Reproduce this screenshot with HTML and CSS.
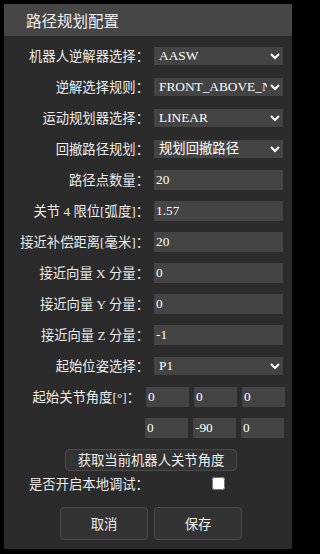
FILE: index.html
```html
<!DOCTYPE html>
<html lang="zh-CN">
<head>
<meta charset="utf-8">
<title>路径规划配置</title>
<link rel="stylesheet" href="styles.css">
</head>
<body>
<div class="panel">
  <div class="header">路径规划配置</div>
  <div class="form">
    <div class="row">
      <label class="label">机器人逆解器选择：</label>
      <select class="ctl sel"><option>AASW</option></select>
    </div>
    <div class="row">
      <label class="label">逆解选择规则：</label>
      <select class="ctl sel"><option>FRONT_ABOVE_NOFLIP</option></select>
    </div>
    <div class="row">
      <label class="label">运动规划器选择：</label>
      <select class="ctl sel"><option>LINEAR</option></select>
    </div>
    <div class="row">
      <label class="label">回撤路径规划：</label>
      <select class="ctl sel"><option>规划回撤路径</option></select>
    </div>
    <div class="row">
      <label class="label">路径点数量：</label>
      <input class="ctl inp" type="text" value="20">
    </div>
    <div class="row">
      <label class="label">关节 4 限位[弧度]：</label>
      <input class="ctl inp" type="text" value="1.57">
    </div>
    <div class="row">
      <label class="label">接近补偿距离[毫米]：</label>
      <input class="ctl inp" type="text" value="20">
    </div>
    <div class="row">
      <label class="label">接近向量 X 分量：</label>
      <input class="ctl inp" type="text" value="0">
    </div>
    <div class="row">
      <label class="label">接近向量 Y 分量：</label>
      <input class="ctl inp" type="text" value="0">
    </div>
    <div class="row">
      <label class="label">接近向量 Z 分量：</label>
      <input class="ctl inp" type="text" value="-1">
    </div>
    <div class="row">
      <label class="label">起始位姿选择：</label>
      <select class="ctl sel"><option>P1</option></select>
    </div>
    <div class="row">
      <label class="label short">起始关节角度[°]：</label>
      <div class="triple">
        <input class="inp small" type="text" value="0">
        <input class="inp small" type="text" value="0">
        <input class="inp small" type="text" value="0">
      </div>
    </div>
    <div class="row">
      <span class="label short"></span>
      <div class="triple second">
        <input class="inp small" type="text" value="0">
        <input class="inp small" type="text" value="-90">
        <input class="inp small" type="text" value="0">
      </div>
    </div>
    <div class="getrow">
      <button class="btn getbtn" type="button">获取当前机器人关节角度</button>
    </div>
    <div class="checkrow">
      <label class="checklabel">是否开启本地调试：</label>
      <span class="checkcell"><input class="chk" type="checkbox"></span>
    </div>
    <div class="actions">
      <button class="btn act" type="button">取消</button>
      <button class="btn act" type="button">保存</button>
    </div>
  </div>
</div>
</body>
</html>
```

FILE: styles.css
```css
html, body {
  margin: 0;
  padding: 0;
  background: #000;
}

body {
  width: 296px;
  height: 554px;
  overflow: hidden;
}

.panel {
  margin: 4px;
  width: 288px;
  height: 545px;
  background: #2b2b2b;
  font-family: "Liberation Serif", "Noto Sans CJK SC", serif;
  color: #ececec;
}

.header {
  height: 32px;
  line-height: 32px;
  padding-left: 22px;
  background: #464646;
  font-family: "Noto Sans CJK SC", sans-serif;
  font-size: 15.5px;
  color: #eeeeee;
}

.form {
  padding-top: 4px;
}

.row {
  display: flex;
  align-items: center;
  height: 31px;
}

.label {
  width: 145px;
  margin-right: 5px;
  text-align: right;
  font-size: 13.33px;
  white-space: nowrap;
}

.label.short {
  width: 136px;
  margin-right: 6px;
}

.ctl {
  width: 129px;
  box-sizing: border-box;
  border: none;
  border-radius: 0;
  background: #444444;
  color: #ffffff;
  font-family: "Liberation Serif", "Noto Sans CJK SC", serif;
  font-size: 13.33px;
  margin: 0;
  outline: none;
}

.sel {
  height: 18px;
  padding: 0 0 0 1px;
  color-scheme: dark;
}

.inp {
  height: 20px;
  padding: 0 2px;
  box-sizing: border-box;
  border: none;
  background: #444444;
  color: #ffffff;
  font-family: "Liberation Serif", "Noto Sans CJK SC", serif;
  font-size: 13.33px;
  margin: 0;
  outline: none;
}

.triple {
  display: flex;
  gap: 5px;
}

.triple.second {
  margin-left: -1px;
}

.inp.small {
  width: 43px;
}

.btn {
  box-sizing: border-box;
  background: #333333;
  border: 1px solid #4a4a4a;
  border-radius: 4px;
  color: #eeeeee;
  font-family: "Noto Sans CJK SC", sans-serif;
  padding: 0;
  margin: 0;
}

.getrow {
  padding-top: 6px;
  padding-left: 61px;
}

.getbtn {
  width: 172px;
  height: 22px;
  font-size: 13.33px;
  line-height: 20px;
}

.checkrow {
  display: flex;
  align-items: center;
  height: 24px;
}

.checklabel {
  margin-left: 25px;
  width: 125px;
  white-space: nowrap;
  font-family: "Noto Sans CJK SC", sans-serif;
  font-size: 13.33px;
}

.checkcell {
  display: flex;
  justify-content: center;
  width: 129px;
}

.chk {
  width: 13px;
  height: 13px;
  margin: 0;
}

.actions {
  display: flex;
  gap: 6px;
  padding-top: 12px;
  padding-left: 56px;
}

.act {
  width: 88px;
  height: 33px;
  font-size: 13.33px;
}
```
